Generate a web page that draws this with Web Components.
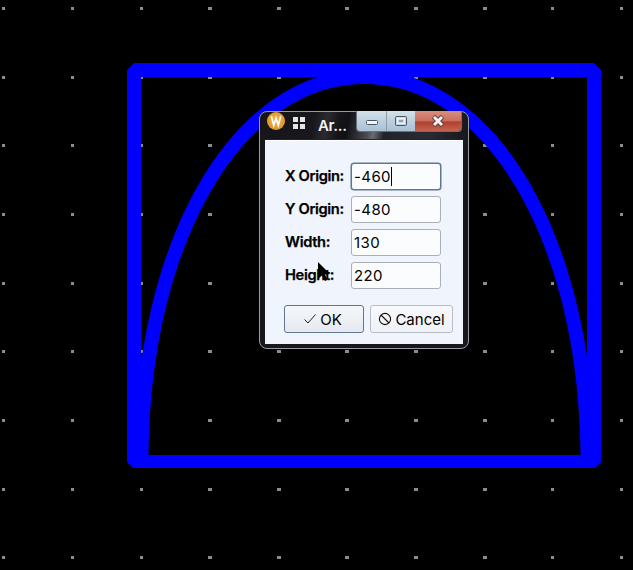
<!DOCTYPE html>
<html><head><meta charset="utf-8"><style>
html,body{margin:0;padding:0;background:#000;width:633px;height:570px;overflow:hidden;font-family:Inter,"Liberation Sans",sans-serif}
</style></head><body>
<cad-canvas>
  <arc-dialog title="Ar...">
    <num-field label="X Origin:" value="-460" focused></num-field>
    <num-field label="Y Origin:" value="-480"></num-field>
    <num-field label="Width:" value="130"></num-field>
    <num-field label="Height:" value="220"></num-field>
    <dlg-button slot="buttons" kind="ok" default>OK</dlg-button>
    <dlg-button slot="buttons" kind="cancel">Cancel</dlg-button>
  </arc-dialog>
  <mouse-cursor></mouse-cursor>
</cad-canvas>
<script>
class CadCanvas extends HTMLElement{
  constructor(){super();const s=this.attachShadow({mode:'open'});
    let dots='';
    const xs=[2,71,140,208,277,345,414,483,551,620], ys=[7,76,144,213,282,350,419,488,556];
    for(const y of ys)for(const x of xs){dots+=`<rect x="${x}" y="${y}" width="${(x-2)%3==0?3:4}" height="3" fill="#8c8c8c"/>`;}
    // the arc is a very slightly squared half ellipse: (|x|/a)^n + (y/b)^n = 1
    const a=223,b=384.5,n=2.06,cx=364.5,cy=461.5;let pts=[];
    for(let i=0;i<=180;i++){const t=Math.PI*i/180,c=Math.cos(t),si=Math.sin(t);
      const x=-Math.sign(c)*Math.pow(Math.abs(c),2/n)*a, y=Math.pow(si,2/n)*b;
      pts.push((cx+x).toFixed(2)+' '+(cy-y).toFixed(2));}
    s.innerHTML=`<style>:host{display:block;position:relative;width:633px;height:570px;background:#000;overflow:hidden}
    svg{display:block}</style>
    <svg width="633" height="570" viewBox="0 0 633 570">
    <g shape-rendering="crispEdges">${dots}</g>
    <path d="M${pts.join(' L')}" fill="none" stroke="#0000ff" stroke-width="14"/>
    <path fill="#0000ff" fill-rule="evenodd" d="M127 70 L134 63 H594 L601 70 V462 L595 468 H133 L127 462 Z M141 77 V455 H587 V77 Z"/>
    </svg><slot></slot>`;}
}
class ArcDialog extends HTMLElement{
  constructor(){super();const s=this.attachShadow({mode:'open'});
    s.innerHTML=`<style>
    :host{display:block;position:absolute;left:259px;top:111px;width:210px;height:238px;box-sizing:border-box;
      border:1px solid #9a9ca0;border-radius:8px;padding:0 5px 4px;color:#000;
      background:linear-gradient(100deg,#15151a 0%,#17171c 26%,#2a2a30 32%,#15151a 38%,#101015 42%,#4a4a52 52%,#6a6a72 55%,#22222a 60%,#2a2a33 80%,#17171d 100%) no-repeat 0 0/100% 29px,#17171d;}
    .bar{display:flex;align-items:flex-start;height:28px;position:relative}
    .logo{margin:0 0 0 2px;width:18px;height:18px;flex:none}
    .sys{margin:5px 0 0 7px;width:13px;height:13px;flex:none}
    .title{color:#f4f4f4;font:600 15px/18px Inter,"Liberation Sans",sans-serif;margin:5px 0 0 13px;letter-spacing:-.3px}
    .win{position:absolute;left:91px;top:-1px;width:106px;height:21px;display:flex;box-sizing:border-box;border:1px solid #6b7078;border-top:0;border-radius:0 0 4px 4px;overflow:hidden}
    .win div{box-sizing:border-box;position:relative}
    .win svg{position:absolute}
    .min{width:30px;background:linear-gradient(#d5e0e8,#bcd0df 50%,#a9c1d6);border-right:1px solid #8e9aa6}
    .max{width:28px;background:linear-gradient(#d5e0e8,#bcd0df 50%,#a9c1d6)}
    .cls{flex:1;background:linear-gradient(#d98f80,#c9705f 48%,#b1402e 55%,#c26453)}
    .client{background:#f0f4fc;border-top:1px solid #fff;height:204px;box-sizing:border-box;padding:22px 0 0 20px;box-shadow:0 -1px 0 #23232a}
    .fields{display:grid;grid-template-columns:1fr;row-gap:6px;width:156px}
    .btns{display:flex;gap:6px;margin-top:16px;margin-left:-1px}
    </style>
    <div class="bar">
      <svg class="logo" viewBox="0 0 18 18"><defs><radialGradient id="g" cx=".5" cy=".45" r=".6"><stop offset="0" stop-color="#f5b84a"/><stop offset="1" stop-color="#dc9128"/></radialGradient></defs><circle cx="9" cy="9" r="9" fill="url(#g)"/><path d="M4.3 4.2 L6.7 13.2 L9 6.2 L11.3 13.2 L13.7 4.2" fill="none" stroke="#fff" stroke-width="1.7"/></svg>
      <svg class="sys" viewBox="0 0 13 13" fill="#e4e4e4" shape-rendering="crispEdges"><rect width="5" height="5" x="1" y="0"/><rect width="5" height="5" x="8" y="0"/><rect width="5" height="5" x="1" y="7"/><rect width="5" height="5" x="8" y="7"/></svg>
      <span class="title"></span>
      <div class="win">
        <div class="min"><svg style="left:8px;top:8px" width="14" height="8" viewBox="0 0 14 8"><rect x="1.5" y="1.5" width="11" height="4" rx="1" fill="#f2f5f8" stroke="#4a5560"/></svg></div>
        <div class="max"><svg style="left:7px;top:4px" width="14" height="12" viewBox="0 0 14 12"><rect x="1.5" y="1.5" width="11" height="9" rx="1" fill="none" stroke="#4a5560"/><rect x="3.5" y="3.6" width="7" height="4.8" fill="none" stroke="#f2f5f8" stroke-width="1.4"/><rect x="5" y="5" width="4" height="2" fill="#8ea2b4"/></svg></div>
        <div class="cls"><svg style="left:16px;top:4px" width="14" height="12" viewBox="0 0 14 12"><path d="M2.5 1.5 L11.5 10.5 M11.5 1.5 L2.5 10.5" stroke="#5a3a38" stroke-width="4.6"/><path d="M3 2 L11 10 M11 2 L3 10" stroke="#f7f3f3" stroke-width="3"/></svg></div>
      </div>
    </div>
    <div class="client">
      <div class="fields"><slot></slot></div>
      <div class="btns"><slot name="buttons"></slot></div>
    </div>`;
    s.querySelector('.title').textContent=this.getAttribute('title');
    this.removeAttribute('title');
  }
}
class NumField extends HTMLElement{
  constructor(){super();const s=this.attachShadow({mode:'open'});
    const f=this.hasAttribute('focused');
    s.innerHTML=`<style>
    :host{display:flex;align-items:center;height:27px;font-family:Inter,"Liberation Sans",sans-serif}
    .l{width:66px;flex:none;font-size:14.7px;font-weight:600;letter-spacing:-.35px;white-space:nowrap;position:relative;top:-1px;-webkit-text-stroke:.25px #000}
    .i{width:90px;height:27px;box-sizing:border-box;background:#fbfcfe;border:1px solid ${f?'#5f7694':'#abb0b8'};border-radius:3px;padding:0 0 0 2px;font-size:15px;line-height:26px;display:flex;letter-spacing:.4px;${f?'box-shadow:0 0 0 .5px #5f7694;':''}}
    .c{width:1px;height:19px;background:#000;margin:3px 0 0 0}
    </style><span class="l"></span><div class="i"><span class="v"></span>${f?'<span class="c"></span>':''}</div>`;
    s.querySelector('.l').textContent=this.getAttribute('label');
    s.querySelector('.v').textContent=this.getAttribute('value');
  }
}
class DlgButton extends HTMLElement{
  constructor(){super();const s=this.attachShadow({mode:'open'});
    const k=this.getAttribute('kind'),d=this.hasAttribute('default');
    const icon=k==='ok'?'<svg width="14" height="12" viewBox="0 0 14 12"><path d="M1.5 6.5 L5 10 L12.5 1.5" fill="none" stroke="#222" stroke-width="1"/></svg>'
      :'<svg width="14" height="14" viewBox="0 0 14 14"><circle cx="7" cy="7" r="5.6" fill="none" stroke="#111" stroke-width="1.1"/><path d="M3 3 L11 11" stroke="#111" stroke-width="1.1"/></svg>';
    s.innerHTML=`<style>
    :host{display:flex;align-items:center;justify-content:center;gap:3px;box-sizing:border-box;height:28px;width:${k==='ok'?80:83}px;
      padding-right:${k==='ok'?3:0}px;
      border:1px solid ${d?'#5f7694':'#b9bdc5'};border-radius:3px;font-size:15px;font-family:Inter,"Liberation Sans",sans-serif;color:#000;
      background:linear-gradient(${d?'#f4f6fa,#e6eaf0':'#f8f9fc,#eef1f6'})}
    </style>${icon}<slot></slot>`;
  }
}
class MouseCursor extends HTMLElement{
  constructor(){super();const s=this.attachShadow({mode:'open'});
    s.innerHTML=`<style>:host{display:block;position:absolute;left:317px;top:261px;width:18px;height:24px}</style>
    <svg width="18" height="24" viewBox="0 0 18 24"><path d="M1 1 L1 18 L5 14.5 L8 20 L10.5 19 L8 13.5 L13 13 Z" fill="#000"/></svg>`;
  }
}
customElements.define('cad-canvas',CadCanvas);
customElements.define('num-field',NumField);
customElements.define('dlg-button',DlgButton);
customElements.define('mouse-cursor',MouseCursor);
customElements.define('arc-dialog',ArcDialog);
</script>
</body></html>
